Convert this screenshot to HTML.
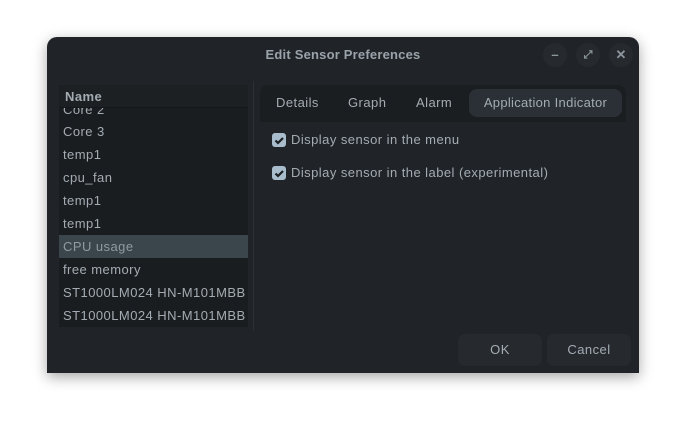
<!DOCTYPE html><html><head><style>
body{margin:0;width:686px;height:430px;background:#fff;position:relative;overflow:hidden;font-family:"Liberation Sans",sans-serif;font-size:13px;color:#a3acb3;letter-spacing:0.45px}
.win{position:absolute;left:47px;top:37px;width:592px;height:336px;background:#202428;border-radius:10px 10px 0 0;box-shadow:0 4px 14px rgba(0,0,0,.35)}
.a{position:absolute}
.title{left:0;width:592px;top:10px;text-align:center;font-weight:bold;color:#9aa3aa;letter-spacing:0.2px}
.cb{position:absolute;width:24px;height:24px;border-radius:12px;background:#262a2f;top:6px;color:#8d969d;text-align:center;line-height:24px;font-weight:bold;letter-spacing:0}
.list{left:12px;top:48px;width:189px;height:242px;background:#1a1d20;overflow:hidden}
.row{position:absolute;left:0;width:189px;height:23px;line-height:23px;padding-left:4px;box-sizing:border-box;white-space:nowrap}
.tabs{left:213px;top:48px;width:366px;height:37px;background:#1b1e21;border-radius:8px 8px 0 0}
.tab{position:absolute;top:4px;height:28px;line-height:28px}
.chk{position:absolute;width:14px;height:14px;background:#a9bccb;border-radius:3px}
.btn{position:absolute;top:297px;width:84px;height:32px;background:#262a2f;border-radius:7px;text-align:center;line-height:32px}
</style></head><body>
<div class="win">
<div class="a title">Edit Sensor Preferences</div>
<div class="cb" style="left:496px">–</div>
<div class="cb" style="left:529px;font-size:11px">⤢</div>
<div class="cb" style="left:562px">✕</div>
<div class="a list">
<div class="row" style="top:13px">Core 2</div>
<div class="row" style="top:0;background:#1d2023;font-weight:bold;padding-left:6px;border-bottom:1px solid #15181a;height:23px">Name</div>
<div class="row" style="top:35px">Core 3</div>
<div class="row" style="top:58px">temp1</div>
<div class="row" style="top:81px">cpu_fan</div>
<div class="row" style="top:104px">temp1</div>
<div class="row" style="top:127px">temp1</div>
<div class="row" style="top:150px;background:#3b454c;color:#8f9aa2">CPU usage</div>
<div class="row" style="top:173px">free memory</div>
<div class="row" style="top:196px">ST1000LM024 HN-M101MBB</div>
<div class="row" style="top:219px">ST1000LM024 HN-M101MBB</div>
</div>
<div class="a" style="left:206px;top:44px;width:1px;height:250px;background:#2c3136"></div>
<div class="a tabs">
<div class="tab" style="left:16px">Details</div>
<div class="tab" style="left:88px">Graph</div>
<div class="tab" style="left:156px">Alarm</div>
<div class="tab" style="left:209px;width:153px;background:#2a3036;border-radius:8px;text-align:center;letter-spacing:0.3px">Application Indicator</div>
</div>
<div class="chk" style="left:225px;top:96px"><svg width="14" height="14"><path d="M3.5 7.5l2.5 2.5 5-5" stroke="#1b1e21" stroke-width="2.2" fill="none"/></svg></div>
<div class="a" style="left:244px;top:95px">Display sensor in the menu</div>
<div class="chk" style="left:225px;top:129px"><svg width="14" height="14"><path d="M3.5 7.5l2.5 2.5 5-5" stroke="#1b1e21" stroke-width="2.2" fill="none"/></svg></div>
<div class="a" style="left:244px;top:128px">Display sensor in the label (experimental)</div>
<div class="btn" style="left:411px">OK</div>
<div class="btn" style="left:500px">Cancel</div>
</div>
</body></html>
